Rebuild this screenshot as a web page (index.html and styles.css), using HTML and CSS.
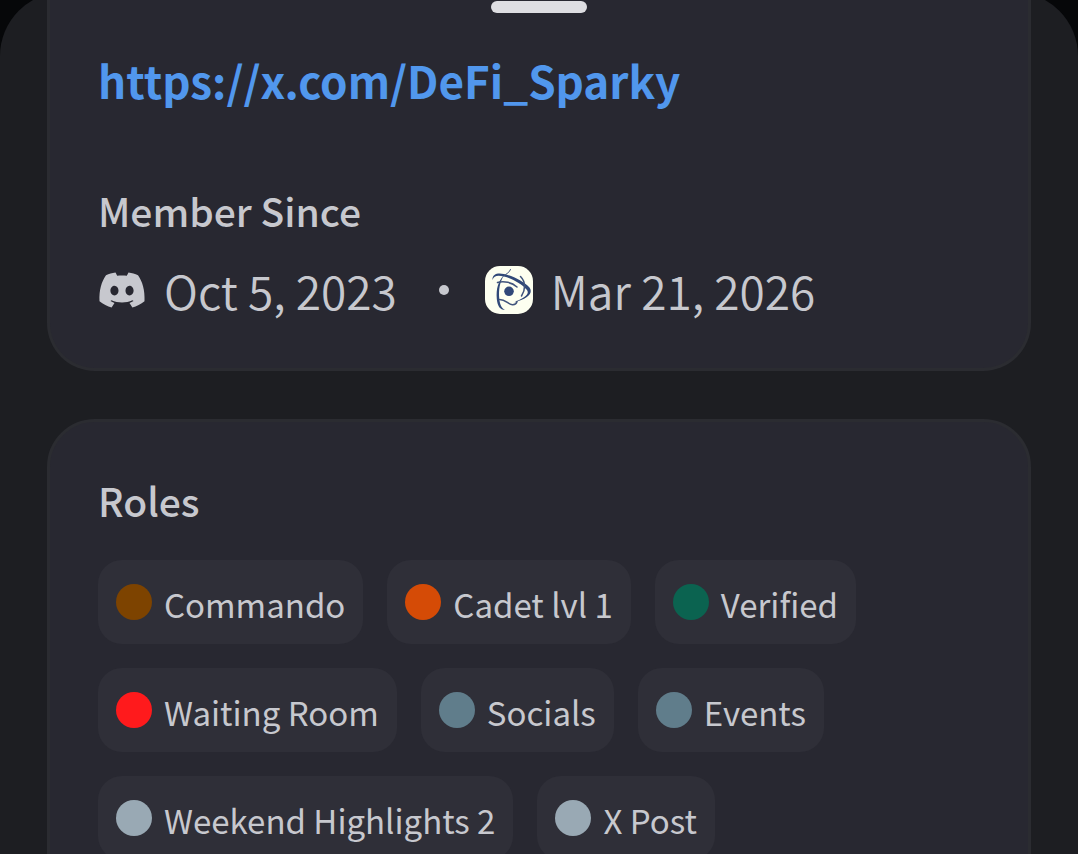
FILE: index.html
```html
<!DOCTYPE html>
<html lang="en">
<head>
<meta charset="utf-8">
<meta name="viewport" content="width=device-width, initial-scale=1">
<title>Profile</title>
<link rel="stylesheet" href="styles.css">
</head>
<body>
<main class="sheet">
  <div class="grabber"></div>
  <section class="card card-about">
    <a class="link" href="https://x.com/DeFi_Sparky">https://x.com/DeFi_Sparky</a>
    <h2 class="heading">Member Since</h2>
    <div class="since">
      <svg class="discord" viewBox="-1 0 48 36" aria-hidden="true">
        <path fill="#c7c8ce" fill-rule="evenodd" d="M16.500 0.500C13 1 10 1.800 7 3.200C2.500 9.500 0 18 0.500 29.200C4 32 8.500 34.200 12.600 35.500L15.500 31C14 30.500 12.600 29.800 11.500 29L12.500 28.200C19 31.200 27 31.200 33.500 28.200L34.500 29C33.400 29.800 32 30.500 30.500 31L33.400 35.500C37.500 34.200 42 32 45.500 29.200C46 18 43.500 9.500 39 3.200C36 1.800 33 1 29.500 0.500L27.800 3.800C24.500 3.400 21.500 3.400 18.200 3.800ZM15.500 13.700C17.800 13.700 19.500 15.900 19.500 18.600C19.500 21.300 17.800 23.500 15.500 23.500C13.200 23.500 11.400 21.300 11.400 18.600C11.400 15.900 13.200 13.700 15.500 13.700ZM30.500 13.700C32.800 13.700 34.600 15.900 34.600 18.600C34.600 21.300 32.800 23.500 30.500 23.500C28.200 23.500 26.500 21.300 26.500 18.600C26.500 15.900 28.200 13.700 30.500 13.700Z"/>
      </svg>
      <span class="date">Oct 5, 2023</span>
      <span class="dot"></span>
      <svg class="server" viewBox="0 0 48 48" aria-hidden="true">
        <rect width="48" height="48" rx="15" fill="#fdfff0"/>
        <g fill="#304878">
          <circle cx="24" cy="25.300" r="4.800"/>
          <path d="M7.500 14C7 8.500 12 6.300 19 8C28 10 39 15.500 44.500 21.500C48.500 27 43 33 29 36.500C39 32 45 28.500 42 24C37 18 27 12.500 19 10.500C12.500 9 9 9.500 7.500 14Z"/>
          <path d="M19.500 8.500C14.500 16 13.500 24 14.300 33C15 39 16.500 42 20 44C15 44 12.500 40 11.800 33C11 23 13 15 19.500 8.500Z"/>
        </g>
        <g fill="none" stroke="#40547c" stroke-linecap="round">
          <path d="M25.500 3.500C24.500 6.500 21.500 7.500 19 10"/>
          <path stroke-width="1.500" d="M35.500 10.500C41 16 40.500 24 36.500 30"/>
          <path stroke-width="1.500" d="M12.500 16.500C19 14.500 27 16.500 32 21"/>
          <path stroke-width="1.500" d="M14.500 33.500C21 33.500 23 38.500 27.500 38.700C30 38.800 31.500 37.500 32 35.500"/>
        </g>
      </svg>
      <span class="date">Mar 21, 2026</span>
    </div>
  </section>
  <section class="card card-roles">
    <h2 class="heading">Roles</h2>
    <ul class="roles">
      <li class="role"><span class="swatch brown"></span><span class="name">Commando</span></li>
      <li class="role"><span class="swatch orange"></span><span class="name">Cadet lvl 1</span></li>
      <li class="role"><span class="swatch green"></span><span class="name">Verified</span></li>
      <li class="role"><span class="swatch red"></span><span class="name">Waiting Room</span></li>
      <li class="role"><span class="swatch slate"></span><span class="name">Socials</span></li>
      <li class="role"><span class="swatch slate"></span><span class="name">Events</span></li>
      <li class="role"><span class="swatch silver"></span><span class="name">Weekend Highlights 2</span></li>
      <li class="role"><span class="swatch silver"></span><span class="name">X Post</span></li>
    </ul>
  </section>
</main>
</body>
</html>
```
FILE: styles.css
```css
* { box-sizing: border-box; }
html { background: #060709; height: 100%; overflow: hidden; }
body {
  margin: 0;
  height: 100%;
  overflow: hidden;
  font-family: "Noto Sans CJK SC", "Noto Sans", sans-serif;
  color: #c7c8ce;
}
.sheet {
  position: relative;
  min-height: 100%;
  padding: 8px 47px 0;
  margin-top: -8px;
  background: #1d1e22;
  border-radius: 64px 64px 0 0;
}
.grabber {
  position: absolute;
  top: 9px;
  left: 50%;
  width: 96px;
  height: 12px;
  margin-left: -48px;
  border-radius: 6px;
  background: #dedee2;
}
.card {
  padding: 48px;
  border: 3px solid #2b2c31;
  border-radius: 48px;
  background: #282831;
}
.card-about {
  border-top: 0;
  border-radius: 0 0 48px 48px;
}
.card-roles { margin-top: 48px; }
.link {
  display: block;
  font-size: 44px;
  line-height: 64px;
  font-weight: 700;
  color: #5197ed;
  text-decoration: none;
}
.heading {
  margin: 0;
  font-size: 39px;
  line-height: 60px;
  font-weight: 500;
}
.card-about .heading { margin-top: 68px; }
.since {
  display: flex;
  align-items: center;
  margin-top: 20px;
}
.discord { width: 48px; height: 36px; margin-right: 18px; }
.date { font-size: 46px; line-height: 60px; font-weight: 350; }
.dot {
  width: 10px;
  height: 10px;
  margin: 0 36px 0 42px;
  border-radius: 50%;
  background: #c7c8ce;
}
.server { width: 48px; height: 48px; margin-right: 18px; }
.roles {
  display: flex;
  flex-wrap: wrap;
  gap: 24px;
  margin: 30px 0 0;
  padding: 0;
  list-style: none;
}
.role {
  display: flex;
  align-items: center;
  gap: 12px;
  height: 84px;
  padding: 0 18px;
  border-radius: 24px;
  background: #2f2f38;
}
.swatch { width: 36px; height: 36px; border-radius: 50%; }
.name { font-size: 33px; line-height: 48px; padding-top: 4px; }
.brown { background: #7d4300; }
.orange { background: #d54b06; }
.green { background: #0b6350; }
.red { background: #ff1a1c; }
.slate { background: #607d8b; }
.silver { background: #99a9b4; }
```
